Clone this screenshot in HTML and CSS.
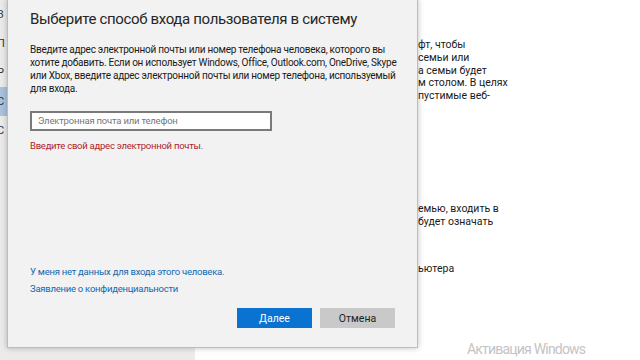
FILE: index.html
```html
<!DOCTYPE html>
<html>
<head>
  <title>Учетные записи</title>
  <link rel="stylesheet" href="styles.css">
</head>
<body>
  <div class="settings">
    <div class="sidebar">
      <div class="nav-item">З</div>
      <div class="nav-item">П</div>
      <div class="nav-item">Р</div>
      <div class="nav-item selected">С</div>
      <div class="nav-item">С</div>
    </div>
    <div class="content">
      <div class="para">
        <p>фт, чтобы</p>
        <p>семьи или</p>
        <p>а семьи будет</p>
        <p>м столом. В целях</p>
        <p>пустимые веб-</p>
      </div>
      <div class="para second">
        <p>емью, входить в</p>
        <p>будет означать</p>
      </div>
      <div class="para third">
        <p>ьютера</p>
      </div>
    </div>
  </div>

  <div class="dialog">
    <h1>Выберите способ входа пользователя в систему</h1>
    <p class="intro">Введите адрес электронной почты или номер телефона человека, которого вы<br>хотите добавить. Если он использует Windows, Office, Outlook.com, OneDrive, Skype<br>или Xbox, введите адрес электронной почты или номер телефона, используемый<br>для входа.</p>
    <input class="email" type="text" placeholder="Электронная почта или телефон">
    <p class="error">Введите свой адрес электронной почты.</p>
    <div class="links">
      <a href="#">У меня нет данных для входа этого человека.</a>
      <a href="#">Заявление о конфиденциальности</a>
    </div>
    <div class="buttons">
      <button class="primary">Далее</button>
      <button class="secondary">Отмена</button>
    </div>
  </div>

  <div class="watermark">Активация Windows</div>
</body>
</html>
```

FILE: styles.css
```css
body {
  margin: 0;
  width: 640px;
  height: 360px;
  overflow: hidden;
  position: relative;
  font-family: Roboto, "Noto Sans", sans-serif;
  background: #fff;
}

.settings {
  display: flex;
  height: 100%;
}

.sidebar {
  width: 195px;
  background: #ebebeb;
}

.nav-item {
  height: 29px;
  line-height: 29px;
  font-size: 11px;
  color: #333;
  text-indent: -3px;
}

.nav-item.selected {
  background: #a9c3dd;
}

.content {
  flex: 1;
  padding-left: 223px;
  padding-top: 39px;
  font-size: 10.5px;
  color: #1a1a1a;
  white-space: nowrap;
  overflow: hidden;
}

.content p {
  margin: 0;
  line-height: 12.8px;
}

.para.second {
  margin-top: 100px;
}

.para.third {
  margin-top: 34px;
}

.dialog {
  position: absolute;
  z-index: 1;
  left: 7px;
  top: -1px;
  width: 411px;
  height: 349px;
  box-sizing: border-box;
  background: #f2f2f2;
  border: 1px solid #bdbdbd;
  box-shadow: 0 0 6px rgba(0, 0, 0, 0.25);
  padding: 8px 0 0 22px;
  color: #222;
}

.dialog h1 {
  margin: 0;
  font-size: 15px;
  line-height: 22px;
  font-weight: 400;
  letter-spacing: -0.35px;
  color: #262626;
  white-space: nowrap;
}

.intro {
  margin: 12.5px 0 0;
  font-size: 10px;
  line-height: 13px;
  letter-spacing: -0.25px;
  color: #1a1a1a;
  white-space: nowrap;
}

.email {
  display: block;
  margin-top: 16px;
  width: 242px;
  height: 20px;
  box-sizing: border-box;
  border: 2px solid #7a7a7a;
  background: #fff;
  padding: 0 6px;
  font-family: inherit;
  font-size: 9.5px;
  letter-spacing: -0.2px;
}

.email::placeholder {
  color: #777;
}

.error {
  margin: 8px 0 0;
  font-size: 9.5px;
  line-height: 13px;
  letter-spacing: -0.25px;
  color: #b0222c;
}

.links {
  display: flex;
  flex-direction: column;
  gap: 4px;
  margin-top: 113px;
}

.links a {
  font-size: 9.5px;
  line-height: 13px;
  letter-spacing: -0.25px;
  color: #1068b0;
  text-decoration: none;
}

.buttons {
  display: flex;
  gap: 8px;
  justify-content: flex-end;
  margin-top: 13.5px;
  padding-right: 22px;
}

.buttons button {
  width: 75px;
  height: 20px;
  border: none;
  font-family: inherit;
  font-size: 10.5px;
  padding: 0;
}

.primary {
  background: #0a72d0;
  color: #fff;
}

.secondary {
  background: #c9c9c9;
  color: #222;
}

.watermark {
  position: absolute;
  left: 467px;
  top: 341px;
  font-size: 14px;
  letter-spacing: -0.8px;
  color: #c4c4c4;
}
```
